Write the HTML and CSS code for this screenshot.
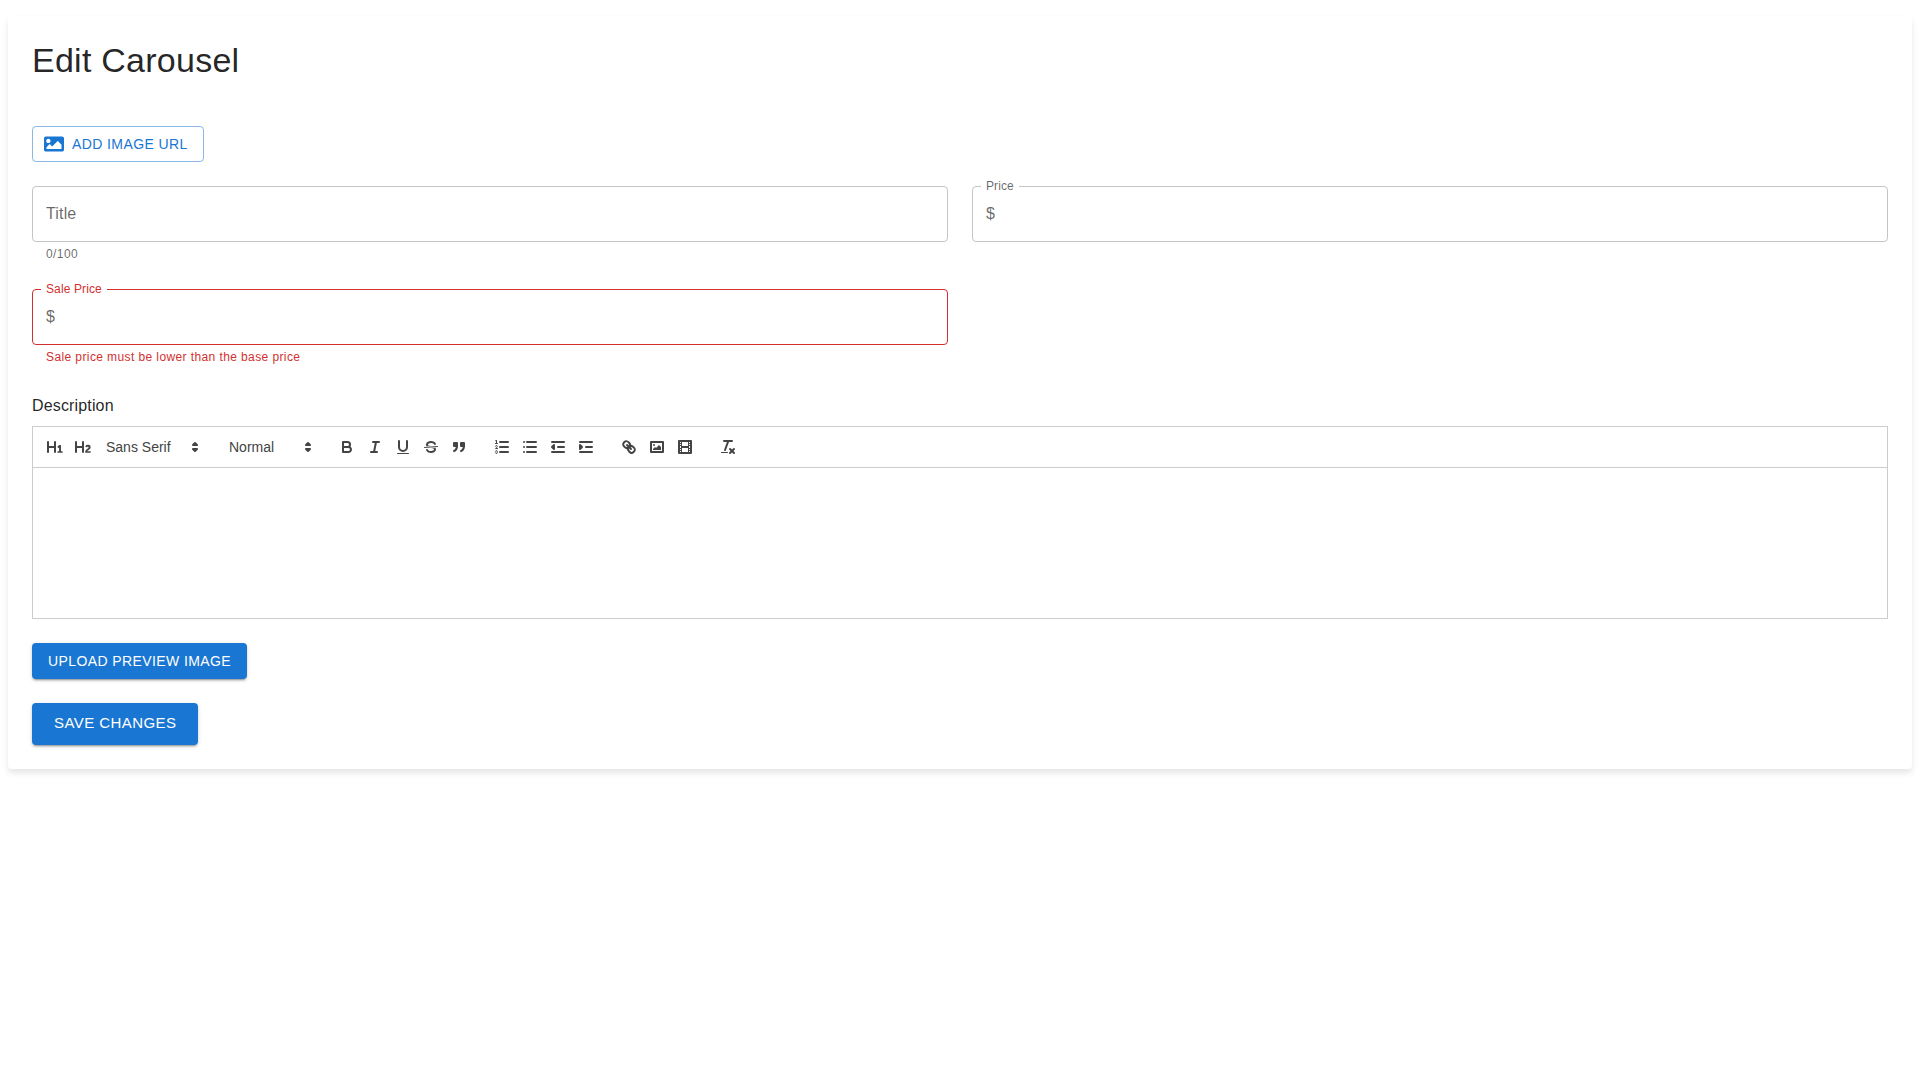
FILE: index.html
```html
<!DOCTYPE html>
<html lang="en">
<head>
    <meta charset="UTF-8">
    <meta name="viewport" content="width=device-width, initial-scale=1.0">
    <title>Edit Carousel</title>
    <link rel="stylesheet" href="styles.css">
</head>
<body>
    <form class="card">
        <h1>Edit Carousel</h1>

        <button type="button" class="btn btn-outlined">
            <svg viewBox="0 0 512 512" width="20" height="20" fill="currentColor"><path d="M464 448H48c-26.51 0-48-21.49-48-48V112c0-26.51 21.49-48 48-48h416c26.51 0 48 21.49 48 48v288c0 26.51-21.49 48-48 48zM112 120c-30.928 0-56 25.072-56 56s25.072 56 56 56 56-25.072 56-56-25.072-56-56-56zM64 384h384V272l-87.515-87.515c-4.686-4.686-12.284-4.686-16.971 0L208 320l-55.515-55.515c-4.686-4.686-12.284-4.686-16.971 0L64 336v48z"/></svg>
            Add Image URL
        </button>

        <div class="fields">
            <div class="field">
                <div class="input-box">
                    <label class="resting" for="title">Title</label>
                    <input type="text" id="title" maxlength="100">
                </div>
                <div class="helper">0/100</div>
            </div>
            <div class="field">
                <div class="input-box">
                    <label for="price">Price</label>
                    <span class="prefix">$</span>
                    <input type="text" id="price">
                </div>
            </div>
            <div class="field error">
                <div class="input-box">
                    <label for="sale-price">Sale Price</label>
                    <span class="prefix">$</span>
                    <input type="text" id="sale-price">
                </div>
                <div class="helper">Sale price must be lower than the base price</div>
            </div>
        </div>

        <div class="description">
            <label for="description">Description</label>
            <div class="toolbar">
                <div class="group">
                    <button type="button" title="Heading 1"><svg viewBox="0 0 18 18"><path class="fill" d="M10,4V14a1,1,0,0,1-2,0V10H3v4a1,1,0,0,1-2,0V4A1,1,0,0,1,3,4V8H8V4a1,1,0,0,1,2,0Zm6.06787,9.209H14.98975V7.59863a.54085.54085,0,0,0-.605-.60547h-.62744a1.01119,1.01119,0,0,0-.748.29688L11.645,8.56641a.5435.5435,0,0,0-.022.8584l.28613.30762a.53861.53861,0,0,0,.84717.0332l.09912-.08789a1.2137,1.2137,0,0,0,.2417-.35254h.02246s-.01123.30859-.01123.60547V13.209H12.041a.54085.54085,0,0,0-.605.60547v.43945a.54085.54085,0,0,0,.605.60547h4.02686a.54085.54085,0,0,0,.605-.60547v-.43945A.54085.54085,0,0,0,16.06787,13.209Z"/></svg></button>
                    <button type="button" title="Heading 2"><svg viewBox="0 0 18 18"><path class="fill" d="M16.73975,13.81445v.43945a.54085.54085,0,0,1-.605.60547H11.855a.58392.58392,0,0,1-.64893-.60547V14.0127c0-2.90527,3.39941-3.42187,3.39941-4.55469a.77675.77675,0,0,0-.84717-.78125,1.17684,1.17684,0,0,0-.83594.38477c-.2749.26367-.561.374-.85791.13184l-.4292-.34082c-.30811-.24219-.38525-.51758-.1543-.81445a2.97155,2.97155,0,0,1,2.45361-1.17676,2.45393,2.45393,0,0,1,2.68408,2.40918c0,2.45312-3.1792,2.92676-3.27832,3.93848h2.79443A.54085.54085,0,0,1,16.73975,13.81445ZM9,3A.99974.99974,0,0,0,8,4V8H3V4A1,1,0,0,0,1,4V14a1,1,0,0,0,2,0V10H8v4a1,1,0,0,0,2,0V4A.99974.99974,0,0,0,9,3Z"/></svg></button>
                    <div class="picker picker-font">
                        <select aria-label="Font">
                            <option>Sans Serif</option>
                            <option>Serif</option>
                            <option>Monospace</option>
                        </select>
                        <svg viewBox="0 0 18 18"><polygon class="stroke" points="7 11 9 13 11 11 7 11"/><polygon class="stroke" points="7 7 9 5 11 7 7 7"/></svg>
                    </div>
                </div>
                <div class="group">
                    <div class="picker picker-size">
                        <select aria-label="Size">
                            <option>Small</option>
                            <option selected>Normal</option>
                            <option>Large</option>
                            <option>Huge</option>
                        </select>
                        <svg viewBox="0 0 18 18"><polygon class="stroke" points="7 11 9 13 11 11 7 11"/><polygon class="stroke" points="7 7 9 5 11 7 7 7"/></svg>
                    </div>
                </div>
                <div class="group">
                    <button type="button" title="Bold"><svg viewBox="0 0 18 18"><path class="stroke" d="M5,4H9.5A2.5,2.5,0,0,1,12,6.5v0A2.5,2.5,0,0,1,9.5,9H5V4Z"/><path class="stroke" d="M5,9h5.5A2.5,2.5,0,0,1,13,11.5v0A2.5,2.5,0,0,1,10.5,14H5V9Z"/></svg></button>
                    <button type="button" title="Italic"><svg viewBox="0 0 18 18"><line class="stroke" x1="7" x2="13" y1="4" y2="4"/><line class="stroke" x1="5" x2="11" y1="14" y2="14"/><line class="stroke" x1="8" x2="10" y1="14" y2="4"/></svg></button>
                    <button type="button" title="Underline"><svg viewBox="0 0 18 18"><path class="stroke" d="M5,3V9a4.012,4.012,0,0,0,4,4H9a4.012,4.012,0,0,0,4-4V3"/><rect class="fill" height="1" rx="0.5" ry="0.5" width="12" x="3" y="15"/></svg></button>
                    <button type="button" title="Strike"><svg viewBox="0 0 18 18"><line class="stroke thin" x1="15.5" x2="2.5" y1="8.5" y2="9.5"/><path class="fill" d="M9.007,8C6.542,7.791,6,7.519,6,6.5,6,5.792,7.283,5,9,5c1.571,0,2.765.679,2.969,1.309a1,1,0,0,0,1.9-.617C13.356,4.106,11.354,3,9,3,6.2,3,4,4.538,4,6.5a3.2,3.2,0,0,0,.5,1.843Z"/><path class="fill" d="M8.984,10C11.457,10.208,12,10.479,12,11.5c0,0.708-1.283,1.5-3,1.5-1.571,0-2.765-.679-2.969-1.309a1,1,0,1,0-1.9.617C4.644,13.894,6.646,15,9,15c2.8,0,5-1.538,5-3.5a3.2,3.2,0,0,0-.5-1.843Z"/></svg></button>
                    <button type="button" title="Blockquote"><svg viewBox="0 0 18 18"><rect class="fill stroke" height="3" width="3" x="4" y="5"/><rect class="fill stroke" height="3" width="3" x="11" y="5"/><path class="fill stroke" d="M7,8c0,4.031-3,5-3,5"/><path class="fill stroke" d="M14,8c0,4.031-3,5-3,5"/></svg></button>
                </div>
                <div class="group">
                    <button type="button" title="Ordered list"><svg viewBox="0 0 18 18"><line class="stroke" x1="7" x2="15" y1="4" y2="4"/><line class="stroke" x1="7" x2="15" y1="9" y2="9"/><line class="stroke" x1="7" x2="15" y1="14" y2="14"/><line class="stroke thin" x1="2.5" x2="4.5" y1="5.5" y2="5.5"/><path class="fill" d="M3.5,6A0.5,0.5,0,0,1,3,5.5V3.085l-0.276.138A0.5,0.5,0,0,1,2.053,3c-0.124-.247-0.023-0.324.224-0.447l1-.5A0.5,0.5,0,0,1,4,2.5v3A0.5,0.5,0,0,1,3.5,6Z"/><path class="stroke thin" d="M4.5,10.5h-2c0-.234,1.85-1.076,1.85-2.234A0.959,0.959,0,0,0,2.5,8.156"/><path class="stroke thin" d="M2.5,14.846a0.959,0.959,0,0,0,1.85-.109A0.7,0.7,0,0,0,3.75,14a0.688,0.688,0,0,0,.6-0.736,0.959,0.959,0,0,0-1.85-.109"/></svg></button>
                    <button type="button" title="Bullet list"><svg viewBox="0 0 18 18"><line class="stroke" x1="6" x2="15" y1="4" y2="4"/><line class="stroke" x1="6" x2="15" y1="9" y2="9"/><line class="stroke" x1="6" x2="15" y1="14" y2="14"/><line class="stroke" x1="3" x2="3" y1="4" y2="4"/><line class="stroke" x1="3" x2="3" y1="9" y2="9"/><line class="stroke" x1="3" x2="3" y1="14" y2="14"/></svg></button>
                    <button type="button" title="Decrease indent"><svg viewBox="0 0 18 18"><line class="stroke" x1="3" x2="15" y1="14" y2="14"/><line class="stroke" x1="3" x2="15" y1="4" y2="4"/><line class="stroke" x1="9" x2="15" y1="9" y2="9"/><polyline class="stroke solid" points="5 7 5 11 3 9 5 7"/></svg></button>
                    <button type="button" title="Increase indent"><svg viewBox="0 0 18 18"><line class="stroke" x1="3" x2="15" y1="14" y2="14"/><line class="stroke" x1="3" x2="15" y1="4" y2="4"/><line class="stroke" x1="9" x2="15" y1="9" y2="9"/><polyline class="stroke solid" points="3 7 3 11 5 9 3 7"/></svg></button>
                </div>
                <div class="group">
                    <button type="button" title="Link"><svg viewBox="0 0 18 18"><line class="stroke" x1="7" x2="11" y1="7" y2="11"/><path class="stroke" d="M8.9,4.577a3.476,3.476,0,0,1,.36,4.679A3.476,3.476,0,0,1,4.577,8.9C3.185,7.5,2.035,6.4,4.217,4.217S7.5,3.185,8.9,4.577Z"/><path class="stroke" d="M13.423,9.1a3.476,3.476,0,0,0-4.679-.36,3.476,3.476,0,0,0,.36,4.679c1.392,1.392,2.5,2.542,4.679.36S14.815,10.5,13.423,9.1Z"/></svg></button>
                    <button type="button" title="Image"><svg viewBox="0 0 18 18"><rect class="stroke" height="10" width="12" x="3" y="4"/><circle class="fill" cx="6" cy="7" r="1"/><polyline class="fill" points="5 12 5 11 7 9 8 10 11 7 13 9 13 12 5 12"/></svg></button>
                    <button type="button" title="Video"><svg viewBox="0 0 18 18"><rect class="stroke" height="12" width="12" x="3" y="3"/><rect class="fill" height="12" width="1" x="5" y="3"/><rect class="fill" height="12" width="1" x="12" y="3"/><rect class="fill" height="2" width="8" x="5" y="8"/><rect class="fill" height="1" width="3" x="3" y="5"/><rect class="fill" height="1" width="3" x="3" y="7"/><rect class="fill" height="1" width="3" x="3" y="10"/><rect class="fill" height="1" width="3" x="3" y="12"/><rect class="fill" height="1" width="3" x="12" y="5"/><rect class="fill" height="1" width="3" x="12" y="7"/><rect class="fill" height="1" width="3" x="12" y="10"/><rect class="fill" height="1" width="3" x="12" y="12"/></svg></button>
                </div>
                <div class="group">
                    <button type="button" title="Clear formatting"><svg viewBox="0 0 18 18"><line class="stroke" x1="5" x2="13" y1="3" y2="3"/><line class="stroke" x1="6" x2="9.35" y1="12" y2="3"/><line class="stroke" x1="11" x2="15" y1="11" y2="15"/><line class="stroke" x1="15" x2="11" y1="11" y2="15"/><rect class="fill" height="1" rx="0.5" ry="0.5" width="7" x="2" y="14"/></svg></button>
                </div>
            </div>
            <textarea id="description"></textarea>
        </div>

        <button type="button" class="btn btn-contained">Upload Preview Image</button>
        <button type="button" class="btn btn-contained btn-large">Save Changes</button>
    </form>
</body>
</html>
```

FILE: styles.css
```css
* {
    box-sizing: border-box;
}
body {
    margin: 0;
    padding: 16px 8px;
    font-family: "Liberation Sans", Arial, sans-serif;
    font-size: 16px;
    line-height: 24px;
    color: rgba(0,0,0,0.87);
    background-color: #fff;
}
.card {
    display: flex;
    flex-direction: column;
    align-items: flex-start;
    gap: 24px;
    padding: 24px;
    border-radius: 4px;
    background: #fff;
    box-shadow: 0 4px 6px rgba(0,0,0,0.1);
}
h1 {
    margin: 0 0 22px;
    font-size: 34px;
    font-weight: 400;
    line-height: 40px;
    letter-spacing: 0.00735em;
}

/* Buttons */
.btn {
    display: flex;
    align-items: center;
    padding: 6px 16px;
    border: none;
    border-radius: 4px;
    font-family: inherit;
    font-size: 14px;
    line-height: 24px;
    letter-spacing: 0.02857em;
    text-transform: uppercase;
    cursor: pointer;
}
.btn-outlined {
    gap: 8px;
    padding: 5px 15px 5px 11px;
    border: 1px solid rgba(25,118,210,0.5);
    color: #1976d2;
    background: none;
}
.btn-contained {
    color: #fff;
    background-color: #1976d2;
    box-shadow: 0 3px 1px -2px rgba(0,0,0,0.2), 0 2px 2px 0 rgba(0,0,0,0.14), 0 1px 5px 0 rgba(0,0,0,0.12);
}
.btn-contained:hover {
    background-color: #1565c0;
}
.btn-large {
    padding: 8px 22px 10px;
    font-size: 15px;
}

/* Text fields */
.fields {
    display: grid;
    grid-template-columns: 1fr 1fr;
    gap: 24px;
    width: 100%;
}
.input-box {
    position: relative;
    display: flex;
    align-items: center;
    gap: 8px;
    height: 56px;
    padding: 0 13px;
    border: 1px solid #c4c4c4;
    border-radius: 4px;
}
/* Label sits over the border line */
.input-box label {
    position: absolute;
    top: -9px;
    left: 8px;
    padding: 0 5px;
    font-size: 12px;
    line-height: 16px;
    letter-spacing: 0.00938em;
    color: rgba(0,0,0,0.6);
    background: #fff;
}
.input-box .resting {
    top: 15px;
    font-size: 16px;
    line-height: 24px;
}
.input-box input {
    flex: 1;
    min-width: 0;
    padding: 0;
    border: none;
    outline: none;
    background: none;
    font-family: inherit;
    font-size: 16px;
}
.prefix {
    color: rgba(0,0,0,0.6);
}
.helper {
    margin: 3px 14px 2px;
    font-size: 12px;
    line-height: 18px;
    letter-spacing: 0.03333em;
    color: rgba(0,0,0,0.6);
}
.error .input-box {
    border-color: #d32f2f;
}
.error label,
.error .helper {
    color: #d32f2f;
}

/* Description editor */
.description {
    width: 100%;
}
.description > label {
    display: block;
    margin-bottom: 6px;
    line-height: 28px;
    letter-spacing: 0.00938em;
}
.toolbar {
    display: flex;
    flex-wrap: wrap;
    gap: 15px;
    padding: 8px;
    border: 1px solid #ccc;
}
.group {
    display: flex;
}
.toolbar button {
    width: 28px;
    height: 24px;
    padding: 3px 5px;
    border: none;
    background: none;
    cursor: pointer;
}
.toolbar svg {
    display: block;
    width: 18px;
    height: 18px;
}
.stroke {
    fill: none;
    stroke: #444;
    stroke-linecap: round;
    stroke-linejoin: round;
    stroke-width: 2;
}
.fill,
.solid {
    fill: #444;
}
.thin {
    stroke-width: 1;
}
.picker {
    position: relative;
    height: 24px;
}
.picker-font {
    width: 108px;
}
.picker-size {
    width: 98px;
}
.picker select {
    width: 100%;
    height: 24px;
    padding: 0 18px 0 8px;
    border: 1px solid transparent;
    appearance: none;
    background: none;
    font-family: inherit;
    font-size: 14px;
    color: #444;
}
.picker svg {
    position: absolute;
    top: 3px;
    right: 1px;
    pointer-events: none;
}
textarea {
    display: block;
    width: 100%;
    height: 151px;
    padding: 12px 15px;
    border: 1px solid #ccc;
    border-top: none;
    outline: none;
    resize: none;
    font-family: inherit;
    font-size: 13px;
}
```
